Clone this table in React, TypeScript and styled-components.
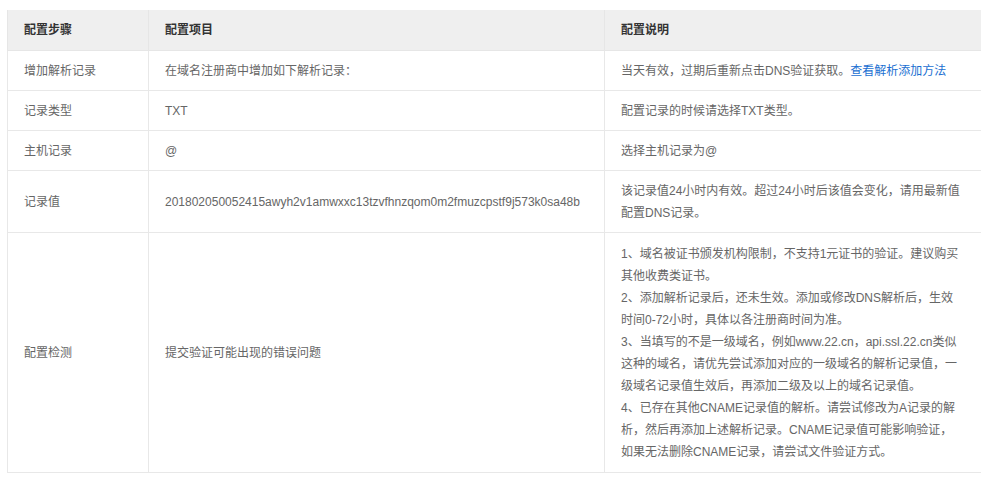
import React from "react";
import styled, { createGlobalStyle } from "styled-components";

const Global = createGlobalStyle`
  html, body { margin: 0; padding: 0; background: #fff; overflow: hidden; }
  body { font-family: "Liberation Sans", Arial, "Noto Sans CJK SC", sans-serif; }
`;

const Page = styled.div`
  padding: 10px 0 0 7px;
  width: 981px;
  box-sizing: border-box;
  overflow: hidden;
`;

const Table = styled.table`
  width: 982px;
  table-layout: fixed;
  border-collapse: collapse;
  font-size: 12px;
  line-height: 22px;
  color: #666;
`;

const HeadCell = styled.th`
  background: #efefef;
  color: #333;
  font-weight: bold;
  text-align: left;
  padding: 9px 16px 9px;
  border-left: 1px solid #e6e6e6;
  border-bottom: 1px solid #e6e6e6;
`;

const Row = styled.tr<{ $tall?: boolean }>`
  & > td {
    padding: ${(p) => (p.$tall ? "10px 16px 9px" : "9px 16px 8px")};
  }
`;

const Cell = styled.td`
  vertical-align: middle;
  border: 1px solid #e8e8e8;
  border-top: none;
  word-break: break-all;
`;

const Link = styled.a`
  color: #1a6fd1;
  text-decoration: none;
`;

const rows: { step: string; item: string; desc: React.ReactNode }[] = [
  {
    step: "增加解析记录",
    item: "在域名注册商中增加如下解析记录：",
    desc: (
      <>
        当天有效，过期后重新点击DNS验证获取。<Link href="#">查看解析添加方法</Link>
      </>
    ),
  },
  { step: "记录类型", item: "TXT", desc: "配置记录的时候请选择TXT类型。" },
  { step: "主机记录", item: "@", desc: "选择主机记录为@" },
  {
    step: "记录值",
    item: "201802050052415awyh2v1amwxxc13tzvfhnzqom0m2fmuzcpstf9j573k0sa48b",
    desc: (
      <>
        该记录值24小时内有效。超过24小时后该值会变化，请用最新值
        <br />
        配置DNS记录。
      </>
    ),
  },
  {
    step: "配置检测",
    item: "提交验证可能出现的错误问题",
    desc: (
      <>
        1、域名被证书颁发机构限制，不支持1元证书的验证。建议购买
        <br />
        其他收费类证书。
        <br />
        2、添加解析记录后，还未生效。添加或修改DNS解析后，生效
        <br />
        时间0-72小时，具体以各注册商时间为准。
        <br />
        3、当填写的不是一级域名，例如www.22.cn，api.ssl.22.cn类似
        <br />
        这种的域名，请优先尝试添加对应的一级域名的解析记录值，一
        <br />
        级域名记录值生效后，再添加二级及以上的域名记录值。
        <br />
        4、已存在其他CNAME记录值的解析。请尝试修改为A记录的解
        <br />
        析，然后再添加上述解析记录。CNAME记录值可能影响验证，
        <br />
        如果无法删除CNAME记录，请尝试文件验证方式。
      </>
    ),
  },
];

export default function App() {
  return (
    <>
      <Global />
      <Page>
        <Table>
          <colgroup>
            <col style={{ width: 141 }} />
            <col style={{ width: 456 }} />
            <col style={{ width: 385 }} />
          </colgroup>
          <thead>
            <tr>
              <HeadCell>配置步骤</HeadCell>
              <HeadCell>配置项目</HeadCell>
              <HeadCell>配置说明</HeadCell>
            </tr>
          </thead>
          <tbody>
            {rows.map((r, i) => (
              <Row key={r.step} $tall={i === rows.length - 1}>
                <Cell>{r.step}</Cell>
                <Cell>{r.item}</Cell>
                <Cell>{r.desc}</Cell>
              </Row>
            ))}
          </tbody>
        </Table>
      </Page>
    </>
  );
}
